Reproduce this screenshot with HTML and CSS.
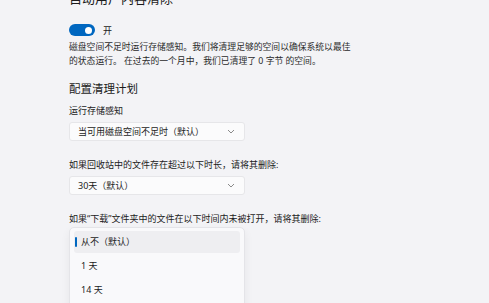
FILE: index.html
```
<!DOCTYPE html>
<html lang="zh-CN">
<head>
    <meta charset="UTF-8">
    <meta name="viewport" content="width=device-width, initial-scale=1.0">
    <title>存储感知</title>
    <link rel="stylesheet" href="styles.css">
</head>
<body>
    <div class="page">
        <h2 class="title">自动用户内容清除</h2>
        <div class="toggle-row">
            <span class="toggle"><span class="knob"></span></span>
            <span class="toggle-label">开</span>
        </div>
        <p class="desc">磁盘空间不足时运行存储感知。我们将清理足够的空间以确保系统以最佳<br>的状态运行。 在过去的一个月中，我们已清理了 0 字节 的空间。</p>

        <h3 class="section">配置清理计划</h3>

        <div class="field">
            <div class="label">运行存储感知</div>
            <div class="select">
                <span>当可用磁盘空间不足时（默认）</span>
                <svg class="chevron" width="8" height="5" viewBox="0 0 8 5"><path d="M1 1l3 3 3-3" fill="none" stroke="#8a8a8a" stroke-width="1"/></svg>
            </div>
        </div>

        <div class="field">
            <div class="label">如果回收站中的文件存在超过以下时长，请将其删除:</div>
            <div class="select">
                <span>30天（默认）</span>
                <svg class="chevron" width="8" height="5" viewBox="0 0 8 5"><path d="M1 1l3 3 3-3" fill="none" stroke="#8a8a8a" stroke-width="1"/></svg>
            </div>
        </div>

        <div class="field">
            <div class="label">如果“下载”文件夹中的文件在以下时间内未被打开，请将其删除:</div>
            <ul class="menu">
                <li class="selected">从不（默认）</li>
                <li>1 天</li>
                <li>14 天</li>
            </ul>
        </div>
    </div>
</body>
</html>
```
FILE: styles.css
```
body {
    margin: 0;
    background-color: #f3f3f6;
    color: #1b1b1b;
    font-family: "Noto Sans", "Noto Sans CJK SC", sans-serif;
    font-size: 9px;
    overflow: hidden;
}
.page {
    margin-top: -11px;
    padding-left: 69px;
}
.title {
    margin: 0;
    font-size: 13px;
    font-weight: 400;
    line-height: 18px;
}
.toggle-row {
    display: flex;
    align-items: center;
    height: 12px;
    margin-top: 17px;
}
.toggle {
    display: flex;
    align-items: center;
    justify-content: flex-end;
    width: 26px;
    height: 12px;
    padding-right: 3px;
    box-sizing: border-box;
    border-radius: 6px;
    background-color: #0067c0;
}
.knob {
    width: 7px;
    height: 7px;
    border-radius: 50%;
    background-color: #ffffff;
}
.toggle-label {
    margin-left: 8px;
}
.desc {
    margin: 4px 0 0;
    font-size: 8.8px;
    line-height: 14px;
    color: #2a2a2a;
}
.section {
    margin: 13px 0 0;
    font-size: 11.5px;
    font-weight: 400;
    line-height: 16px;
}
.field {
    margin-top: 7px;
}
.field + .field {
    margin-top: 17px;
}
.label {
    line-height: 14px;
}
.select {
    display: flex;
    align-items: center;
    justify-content: space-between;
    width: 176px;
    height: 19px;
    margin-top: 4px;
    padding: 0 8px;
    box-sizing: border-box;
    background-color: #fbfbfc;
    border: 1px solid #e6e6e9;
    border-radius: 3px;
}
.chevron {
    margin-right: 1px;
}
.menu {
    list-style: none;
    width: 176px;
    height: 90px;
    margin: 1px 0 0;
    padding: 3px 4px 0;
    box-sizing: border-box;
    background-color: #f9f9fb;
    border: 1px solid #e4e4e8;
    border-radius: 5px;
    box-shadow: 0 4px 10px rgba(0, 0, 0, 0.06);
}
.menu li {
    position: relative;
    height: 22px;
    margin-bottom: 2px;
    padding-left: 7px;
    line-height: 22px;
    border-radius: 3px;
}
.menu li.selected {
    background-color: #eeeef1;
}
.menu li.selected::before {
    content: "";
    position: absolute;
    left: 1px;
    top: 6px;
    width: 2px;
    height: 10px;
    border-radius: 1px;
    background-color: #0067c0;
}
```
